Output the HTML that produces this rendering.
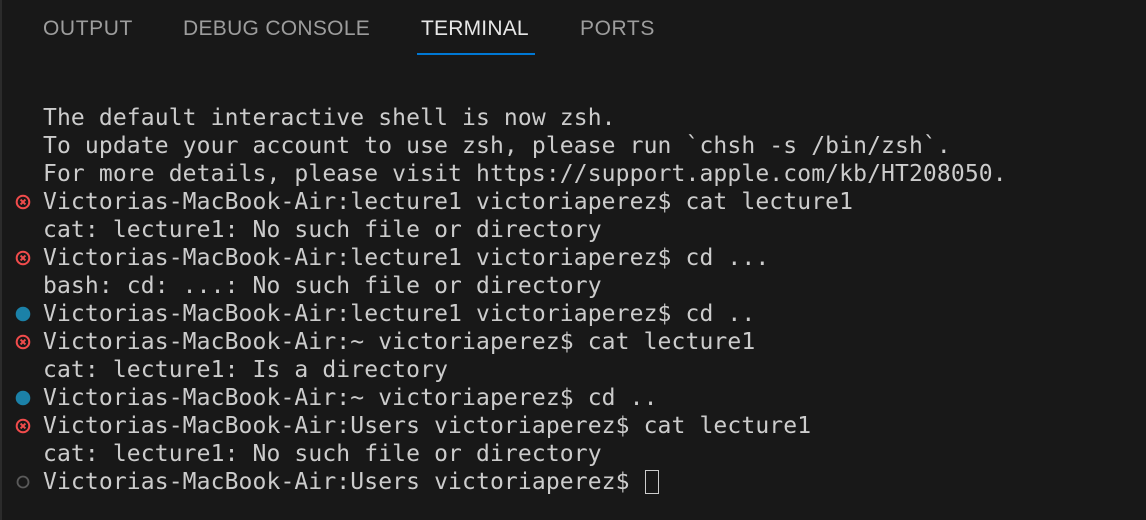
<!DOCTYPE html>
<html><head><style>
body{margin:0;width:1146px;height:520px;background:#181818;overflow:hidden;position:relative}
.bl{position:absolute;left:0;top:0;width:2px;height:520px;background:#2b2b2b}
.tab{position:absolute;top:16px;font:21px "Liberation Sans",sans-serif;color:#9d9d9d;white-space:nowrap;line-height:26px}
.ul{position:absolute;left:417px;top:53px;width:118px;height:2px;background:#0078d4}
.term{position:absolute;left:43px;top:104px;font:23px "DejaVu Sans Mono",monospace;color:#cccccc;line-height:28px;white-space:pre;letter-spacing:0.12px}
.ic{position:absolute;left:15px;width:16px;height:16px}
.cur{position:absolute;left:645px;top:470px;width:12px;height:22px;border:1.5px solid #cccccc}
</style></head><body>
<div class="bl"></div>
<div class="tab" style="left:43px;letter-spacing:0.6px">OUTPUT</div>
<div class="tab" style="left:183px;letter-spacing:0.3px">DEBUG CONSOLE</div>
<div class="tab" style="left:421px;color:#e7e7e7;letter-spacing:0.2px">TERMINAL</div>
<div class="tab" style="left:580px;letter-spacing:0.6px">PORTS</div>
<div class="ul"></div>
<div class="term">The default interactive shell is now zsh.
To update your account to use zsh, please run `chsh -s /bin/zsh`.
For more details, please visit https://support.apple.com/kb/HT208050.
Victorias-MacBook-Air:lecture1 victoriaperez$ cat lecture1
cat: lecture1: No such file or directory
Victorias-MacBook-Air:lecture1 victoriaperez$ cd ...
bash: cd: ...: No such file or directory
Victorias-MacBook-Air:lecture1 victoriaperez$ cd ..
Victorias-MacBook-Air:~ victoriaperez$ cat lecture1
cat: lecture1: Is a directory
Victorias-MacBook-Air:~ victoriaperez$ cd ..
Victorias-MacBook-Air:Users victoriaperez$ cat lecture1
cat: lecture1: No such file or directory
Victorias-MacBook-Air:Users victoriaperez$ </div>
<svg class="ic" style="top:194px" viewBox="0 0 16 16"><circle cx="8" cy="8" r="6.3" fill="none" stroke="#f14c4c" stroke-width="2"/><path d="M5.6 5.6L10.4 10.4M10.4 5.6L5.6 10.4" stroke="#f14c4c" stroke-width="2"/></svg>
<svg class="ic" style="top:250px" viewBox="0 0 16 16"><circle cx="8" cy="8" r="6.3" fill="none" stroke="#f14c4c" stroke-width="2"/><path d="M5.6 5.6L10.4 10.4M10.4 5.6L5.6 10.4" stroke="#f14c4c" stroke-width="2"/></svg>
<svg class="ic" style="top:306px" viewBox="0 0 16 16"><circle cx="8" cy="8" r="7.3" fill="#1b81a8"/></svg>
<svg class="ic" style="top:334px" viewBox="0 0 16 16"><circle cx="8" cy="8" r="6.3" fill="none" stroke="#f14c4c" stroke-width="2"/><path d="M5.6 5.6L10.4 10.4M10.4 5.6L5.6 10.4" stroke="#f14c4c" stroke-width="2"/></svg>
<svg class="ic" style="top:390px" viewBox="0 0 16 16"><circle cx="8" cy="8" r="7.3" fill="#1b81a8"/></svg>
<svg class="ic" style="top:418px" viewBox="0 0 16 16"><circle cx="8" cy="8" r="6.3" fill="none" stroke="#f14c4c" stroke-width="2"/><path d="M5.6 5.6L10.4 10.4M10.4 5.6L5.6 10.4" stroke="#f14c4c" stroke-width="2"/></svg>
<svg class="ic" style="top:474px" viewBox="0 0 16 16"><circle cx="8" cy="8" r="5.5" fill="none" stroke="#5a5a5a" stroke-width="1.8"/></svg>
<div class="cur"></div>
</body></html>
